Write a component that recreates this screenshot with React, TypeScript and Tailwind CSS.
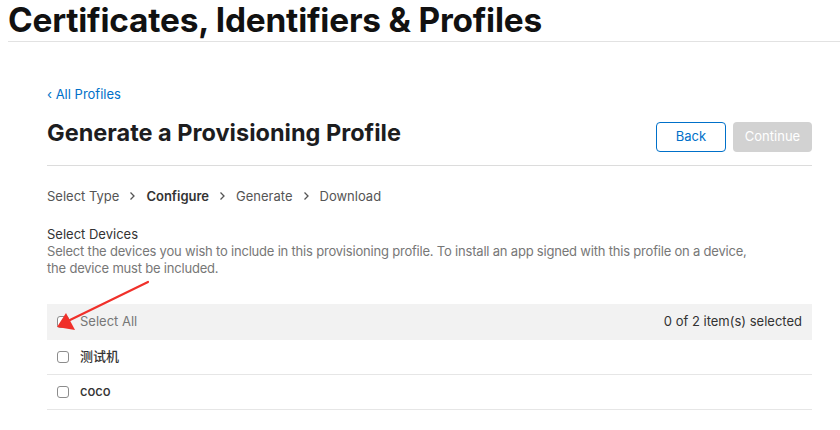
import React from 'react';

const font = { fontFamily: 'Inter, "Noto Sans CJK SC", sans-serif' };

const steps = ['Select Type', 'Configure', 'Generate', 'Download'];

const devices = [{ id: '1', name: '测试机' }, { id: '2', name: 'coco' }];

const Checkbox = () => (
  <span className="inline-block w-[12px] h-[12px] rounded-[3px] border border-[#8c8c8c] bg-white shrink-0" />
);

const Chevron = () => (
  <svg width="7" height="10" viewBox="0 0 7 10" className="mx-[10px]">
    <path d="M1.5 1.5 L5 5 L1.5 8.5" fill="none" stroke="#555" strokeWidth="1.3" />
  </svg>
);

const App = () => {
  return (
    <div className="relative w-[840px] h-[430px] bg-white text-[#1d1d1f] overflow-hidden" style={font}>
      <div className="ml-2 h-[42px] border-b border-[#e2e2e2]">
        <h1 className="text-[33.4px] font-bold leading-[40px] tracking-[-0.2px] text-[#111]">
          Certificates, Identifiers &amp; Profiles
        </h1>
      </div>

      <div className="ml-[47px] w-[765px]">
        <a className="block mt-[43px] text-[13px] leading-[18px] text-[#0070c9]">‹ All Profiles</a>

        <div className="flex items-start justify-between mt-[19px] pb-[13px] border-b border-[#dcdcdc]">
          <h2 className="text-[23.5px] font-bold leading-[22px] text-[#1d1d1f]">
            Generate a Provisioning Profile
          </h2>
          <div className="flex gap-[7px]">
            <button className="w-[70px] h-[30px] rounded-[4px] border border-[#0070c9] text-[13px] text-[#0070c9]">
              Back
            </button>
            <button className="w-[79px] h-[30px] rounded-[4px] bg-[#d2d2d2] text-[13px] text-white">
              Continue
            </button>
          </div>
        </div>

        <div className="flex items-center mt-[21px] text-[13px] leading-[18px] text-[#555]">
          {steps.map((s, i) => (
            <React.Fragment key={s}>
              {i > 0 && <Chevron />}
              <span className={i === 1 ? 'font-semibold text-[#333]' : ''}>{s}</span>
            </React.Fragment>
          ))}
        </div>

        <div className="mt-[20px] text-[13px] leading-[18px] text-[#333]">Select Devices</div>
        <p className="text-[13px] leading-[17px] tracking-[-0.2px] text-[#777] w-[708px]">
          Select the devices you wish to include in this provisioning profile. To install an app signed with this profile on a device, the device must be included.
        </p>

        <div className="mt-[27px]">
          <div className="flex items-center justify-between h-[36px] bg-[#f2f2f2] pl-[10px] pr-[10px]">
            <label className="flex items-center gap-[11px] text-[13px] text-[#777]">
              <Checkbox />
              Select All
            </label>
            <span className="text-[13px] text-[#333]">0 of 2 item(s) selected</span>
          </div>
          {devices.map((d) => (
            <div key={d.id} className="flex items-center gap-[11px] h-[35px] pl-[10px] border-b border-[#e6e6e6] text-[13px] font-medium text-[#333]">
              <Checkbox />
              {d.name}
            </div>
          ))}
        </div>
      </div>

      <svg className="absolute left-0 top-0" width="840" height="430" viewBox="0 0 840 430">
        <line x1="148" y1="282" x2="70" y2="320" stroke="#f0302a" strokeWidth="2.2" strokeLinecap="round" />
        <polygon points="57,327 66,313 75,330" fill="#f0302a" />
      </svg>
    </div>
  );
};

export default App;
